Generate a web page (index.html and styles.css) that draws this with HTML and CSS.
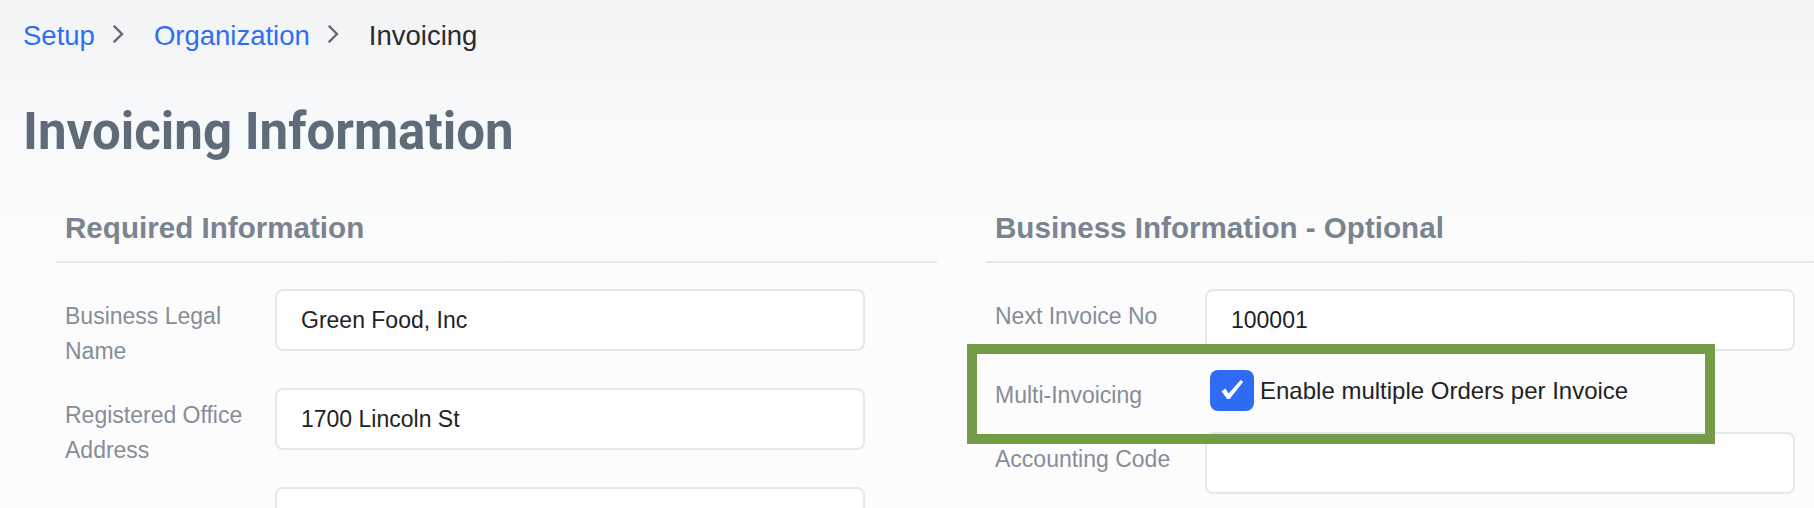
FILE: index.html
```html
<!DOCTYPE html>
<html lang="en">
<head>
<meta charset="utf-8">
<title>Invoicing Information</title>
<link rel="stylesheet" href="styles.css">
</head>
<body>
<div class="page">
  <nav class="crumbs">
    <a class="crumb-link" href="#">Setup</a>
    <svg class="chev" viewBox="0 0 11 18" aria-hidden="true"><polyline points="1.6,1.6 9,9 1.6,16.4"/></svg>
    <a class="crumb-link" href="#">Organization</a>
    <svg class="chev" viewBox="0 0 11 18" aria-hidden="true"><polyline points="1.6,1.6 9,9 1.6,16.4"/></svg>
    <span class="crumb-current">Invoicing</span>
  </nav>

  <h1 class="title">Invoicing Information</h1>

  <div class="sections">
    <section class="panel">
      <h2 class="panel-title">Required Information</h2>
      <div class="fields">
        <div class="field">
          <label class="field-label">Business Legal Name</label>
          <input class="text-input" type="text" value="Green Food, Inc">
        </div>
        <div class="field">
          <label class="field-label">Registered Office Address</label>
          <input class="text-input" type="text" value="1700 Lincoln St">
        </div>
        <div class="field">
          <label class="field-label"></label>
          <input class="text-input" type="text" value="">
        </div>
      </div>
    </section>

    <section class="panel">
      <h2 class="panel-title">Business Information - Optional</h2>
      <div class="fields">
        <div class="field">
          <label class="field-label">Next Invoice No</label>
          <input class="text-input" type="text" value="100001">
        </div>
        <div class="field field-check">
          <label class="field-label">Multi-Invoicing</label>
          <label class="check">
            <span class="check-box">
              <svg viewBox="0 0 44 41" aria-hidden="true"><path d="M11.6 21.2 L15.4 18.4 L18.6 23.4 L30.7 9.9 L33.2 11.7 L19.6 29.1 L17.1 29.1 Z"/></svg>
            </span>
            <span class="check-text">Enable multiple Orders per Invoice</span>
          </label>
          <div class="highlight"></div>
        </div>
        <div class="field">
          <label class="field-label">Accounting Code</label>
          <input class="text-input" type="text" value="">
        </div>
      </div>
    </section>
  </div>
</div>
</body>
</html>
```

FILE: styles.css
```css
html, body {
  margin: 0;
  height: 100%;
}

body {
  overflow: hidden;
  background: linear-gradient(180deg, #f2f3f5 0px, #f8f9fa 120px, #fcfcfc 260px, #fcfcfc 100%);
  font-family: "Liberation Sans", Arial, sans-serif;
}

.page {
  padding: 21px 0 0 23px;
}

/* Breadcrumb */
.crumbs {
  display: flex;
  align-items: center;
  height: 30px;
  font-size: 27.5px;
  line-height: 30px;
}

.crumb-link {
  color: #2f6ef2;
  text-decoration: none;
}

.crumb-current {
  color: #2b2b2e;
}

.chev {
  flex: none;
  width: 11px;
  height: 18px;
  margin: 0 30px 5px 18px;
}

.chev polyline {
  fill: none;
  stroke: #686a6e;
  stroke-width: 2.4;
  stroke-linecap: square;
}

/* Page title */
.title {
  margin: 51px 0 0;
  font-family: Roboto, "Liberation Sans", sans-serif;
  font-weight: 700;
  font-size: 51px;
  line-height: 60px;
  color: #5f6b78;
}

/* Two panels */
.sections {
  display: grid;
  grid-template-columns: 881px 881px;
  column-gap: 49px;
  margin: 51px 0 0 33px;
}

.panel-title {
  margin: 0;
  padding: 0 0 18px 9px;
  border-bottom: 2px solid #e6e7ea;
  font-family: "Liberation Sans", Arial, sans-serif;
  font-weight: 700;
  font-size: 29.6px;
  line-height: 30px;
  color: #7a8490;
}

.fields {
  padding: 26px 0 0 9px;
}

.field {
  position: relative;
  display: flex;
  align-items: flex-start;
  margin-bottom: 19px;
}

.field-label {
  flex: none;
  box-sizing: border-box;
  width: 210px;
  padding: 10px 10px 0 0;
  font-size: 23px;
  line-height: 35px;
  color: #858e98;
}

.field-check .field-label {
  padding-top: 8px;
}

.text-input {
  flex: none;
  box-sizing: border-box;
  width: 590px;
  height: 62px;
  margin: 0;
  padding: 0 0 0 24px;
  border: 2px solid #e5e7ea;
  border-radius: 8px;
  background: #ffffff;
  font-family: "Liberation Sans", Arial, sans-serif;
  font-size: 23px;
  color: #222225;
  outline: none;
}

/* Checkbox */
.check {
  display: flex;
  align-items: center;
  gap: 6px;
  height: 41px;
  margin-left: 5px;
  font-size: 24px;
  color: #232326;
}

.check-box {
  flex: none;
  display: block;
  width: 44px;
  height: 41px;
  border-radius: 8px;
  background: #2f6cf5;
}

.check-box svg {
  display: block;
  width: 44px;
  height: 41px;
}

.check-box path {
  fill: #ffffff;
}

/* Annotation frame drawn over the row */
.highlight {
  position: absolute;
  left: -28px;
  top: -26px;
  z-index: 2;
  box-sizing: border-box;
  width: 748px;
  height: 100px;
  border: 10px solid #749b45;
  pointer-events: none;
}
```
